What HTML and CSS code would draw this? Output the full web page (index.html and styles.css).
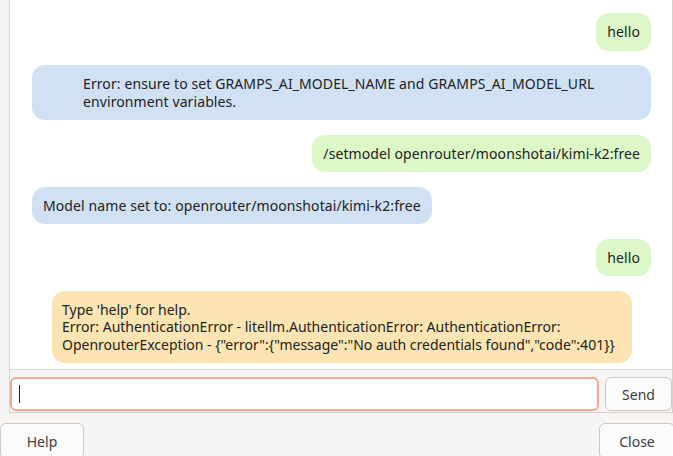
FILE: index.html
```html
<!DOCTYPE html>
<html lang="en">
<head>
    <meta charset="UTF-8">
    <title>Gramps AI Chat</title>
    <link rel="stylesheet" href="styles.css">
</head>
<body>
    <div class="frame">
        <div class="chat">
            <div class="msg user">hello</div>
            <div class="msg bot wide">Error: ensure to set GRAMPS_AI_MODEL_NAME and GRAMPS_AI_MODEL_URL<br>environment variables.</div>
            <div class="msg user">/setmodel openrouter/moonshotai/kimi-k2:free</div>
            <div class="msg bot">Model name set to: openrouter/moonshotai/kimi-k2:free</div>
            <div class="msg user">hello</div>
            <div class="msg system">Type 'help' for help.<br>Error: AuthenticationError - litellm.AuthenticationError: AuthenticationError:<br>OpenrouterException - {"error":{"message":"No auth credentials found","code":401}}</div>
        </div>
        <div class="input-row">
            <div class="entry-wrap">
                <input type="text" class="entry">
                <span class="caret"></span>
            </div>
            <button class="btn send">Send</button>
        </div>
    </div>
    <div class="dialog-buttons">
        <button class="btn help">Help</button>
        <button class="btn close">Close</button>
    </div>
</body>
</html>
```

FILE: styles.css
```css
body {
    font-family: 'Noto Sans', sans-serif;
    font-size: 14px;
    background-color: #f6f5f4;
    color: #222;
    margin: 0;
    padding: 0;
    width: 673px;
    height: 456px;
    overflow: hidden;
}
.frame {
    margin-left: 9px;
    width: 662px;
    border-left: 1px solid #d6d1cd;
    border-right: 1px solid #d6d1cd;
    border-bottom: 1px solid #d6d1cd;
}
.chat {
    height: 370px;
    background-color: #fff;
    border-bottom: 1px solid #dcd8d4;
    display: flex;
    flex-direction: column;
    align-items: flex-start;
    gap: 14.5px;
    padding: 13px 21px 0 22px;
    box-sizing: border-box;
    overflow: hidden;
}
.msg {
    padding: 10px 11px;
    line-height: 17.5px;
    border-radius: 13px;
    letter-spacing: 0.1px;
}
.user {
    align-self: flex-end;
    background-color: #dcf8c6;
}
.bot {
    background-color: #d0e1f4;
}
.bot.wide {
    align-self: stretch;
    padding-left: 51px;
}
.system {
    align-self: stretch;
    margin: 0 19px 0 20px;
    padding-left: 10px;
    letter-spacing: 0;
    background-color: #fce5b2;
}
.input-row {
    display: flex;
    gap: 6px;
    padding: 7px 0 1px 0;
}
.entry-wrap {
    flex: 1;
    position: relative;
    display: flex;
}
.entry {
    flex: 1;
    height: 34px;
    box-sizing: border-box;
    border: 2px solid #f2a994;
    border-radius: 6px;
    padding: 0 8px;
    font: inherit;
    outline: none;
}
.caret {
    position: absolute;
    left: 9px;
    top: 8px;
    width: 1px;
    height: 18px;
    background-color: #222;
}
.btn {
    font-family: 'Noto Sans', sans-serif;
    font-size: 14px;
    color: #3d3d3d;
    background-color: #fbfbfb;
    border: 1px solid #cdc7c2;
    border-radius: 6px;
    cursor: pointer;
}
.send {
    width: 67px;
    height: 34px;
}
.dialog-buttons {
    display: flex;
    justify-content: space-between;
    margin-top: 10px;
}
.help {
    width: 84px;
    height: 36px;
}
.close {
    width: 76px;
    height: 36px;
    margin-right: -2px;
}
```
